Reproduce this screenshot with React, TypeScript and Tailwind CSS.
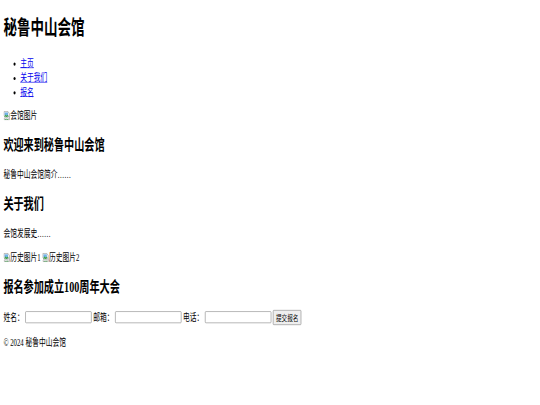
function BrokenImg({ alt }: { alt: string }) {
  return (
    <span className="inline-block">
      <svg width="16" height="16" viewBox="0 0 16 16" className="inline-block align-[-2px]">
        <path d="M1.5 1.5h9.5l3.5 3.5v5l-2.5-1.5-2.5 2-2.5-2-2.5 1.5-3-1.5z" fill="#f4f4f4" stroke="#8a8a8a" />
        <rect x="3" y="3" width="8" height="5" fill="#6fb2e8" />
        <path d="M2.5 9l3-3 2 2 2-1.5 2.5 2v1.5l-2 -1-2.5 2-2.5-2-2.5 1.5z" fill="#3fa34d" />
        <path d="M2 12l2.5-1.5 2.5 2 2.5-2 2.5 1.5 2.5-1.5v4h-12.5z" fill="#f4f4f4" stroke="#8a8a8a" />
        <path d="M3 14.5l2.5-1.5 2 1 2-1.2 2.5 1.2v0.5h-9z" fill="#3fa34d" />
      </svg>
      {alt}
    </span>
  );
}

export default function App() {
  return (
    <div className="w-[540px] h-[405px] overflow-hidden bg-white">
      <div className="w-[1280px] h-[648px] flow-root origin-top-left scale-x-[0.421875] scale-y-[0.625] px-[8px] text-[16px] leading-[1.448] text-black font-['Liberation_Serif','Noto_Sans_CJK_SC',serif]">
        <header>
          <h1 className="text-[32px] leading-[1.448] font-bold mt-[22px] mb-[21.44px]">秘鲁中山会馆</h1>
          <nav>
            <ul className="list-disc pl-[40px] my-[15px]">
              <li className="leading-[23px]">
                <a href="#" className="text-[#0000ee] underline">主页</a>
              </li>
              <li className="leading-[23px]">
                <a href="#" className="text-[#0000ee] underline">关于我们</a>
              </li>
              <li className="leading-[23px]">
                <a href="#" className="text-[#0000ee] underline">报名</a>
              </li>
            </ul>
          </nav>
        </header>
        <div>
          <BrokenImg alt="会馆图片" />
        </div>
        <section>
          <h2 className="text-[24px] leading-[1.3] font-bold my-[19.92px]">欢迎来到秘鲁中山会馆</h2>
          <p className="my-[16px]">秘鲁中山会馆简介……</p>
        </section>
        <section>
          <h2 className="text-[24px] leading-[1.3] font-bold my-[19.92px]">关于我们</h2>
          <p className="my-[16px]">会馆发展史……</p>
          <div>
            <BrokenImg alt="历史图片1" /> <BrokenImg alt="历史图片2" />
          </div>
        </section>
        <section>
          <h2 className="text-[24px] leading-[1.3] font-bold my-[19.92px]">报名参加成立100周年大会</h2>
          <form onSubmit={(e) => e.preventDefault()} className="flex items-center h-[25px] gap-[4px]">
            <label>姓名：</label>
            <input type="text" className="w-[157px] h-[19px] px-[2px] border border-[#767676] rounded-[2px] bg-white" />
            <label>邮箱：</label>
            <input type="email" className="w-[157px] h-[19px] px-[2px] border border-[#767676] rounded-[2px] bg-white" />
            <label>电话：</label>
            <input type="tel" className="w-[157px] h-[19px] px-[2px] border border-[#767676] rounded-[2px] bg-white" />
            <button type="submit" className="h-[24px] px-[6px] text-[13.333px] leading-[1.448] bg-[#efefef] border border-[#767676] rounded-[2px] font-['Noto_Sans_CJK_SC',sans-serif]">
              提交报名
            </button>
          </form>
        </section>
        <footer>
          <p className="my-[16px]">© 2024 秘鲁中山会馆</p>
        </footer>
      </div>
    </div>
  );
}
